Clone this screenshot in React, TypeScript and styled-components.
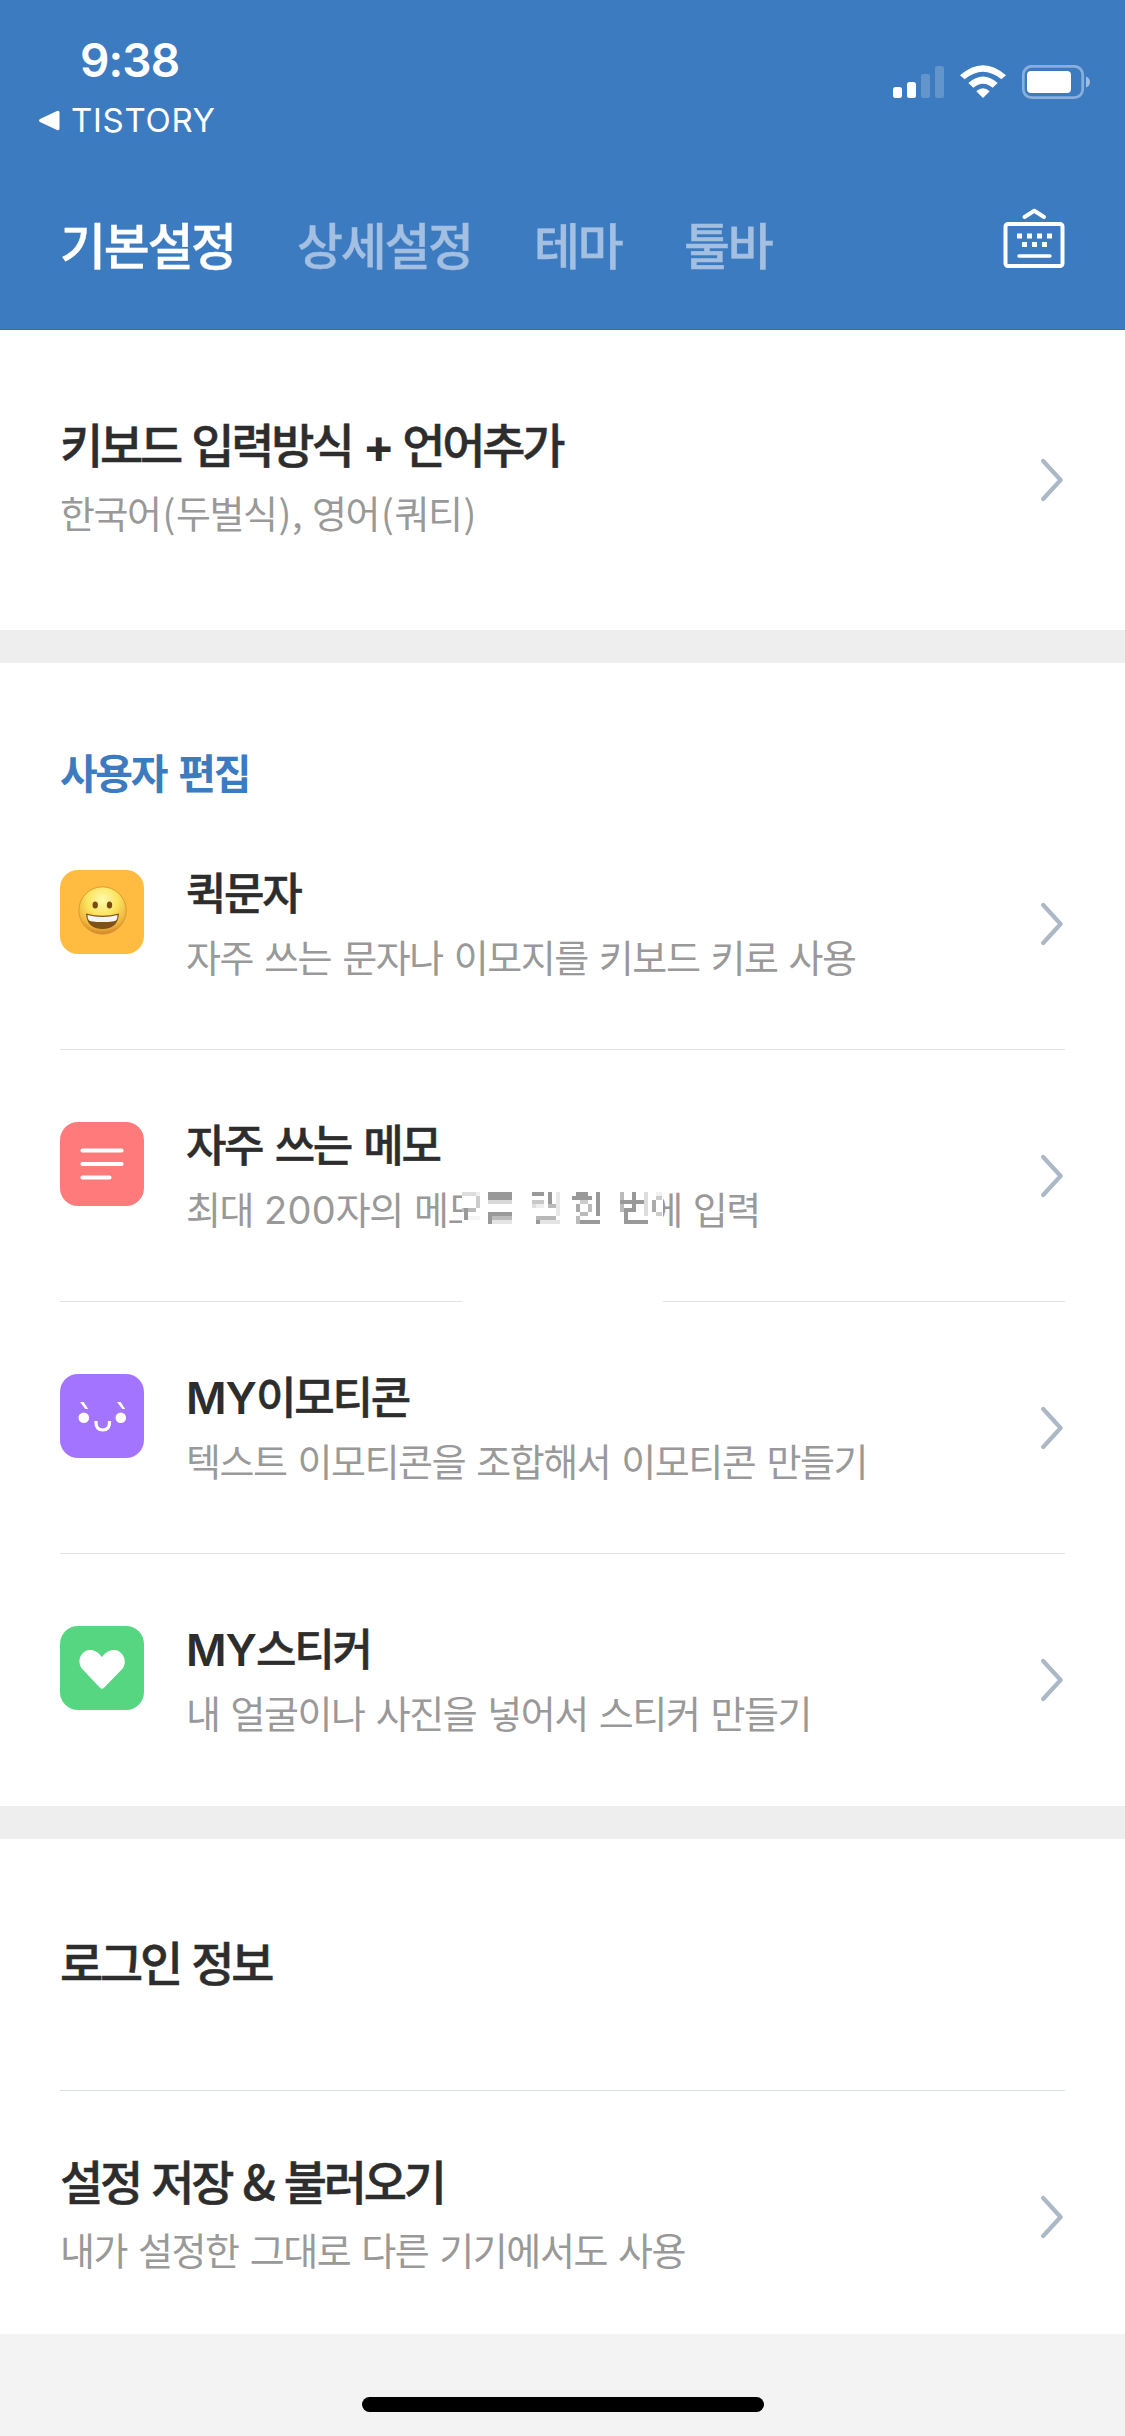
import React from "react";
import styled, { createGlobalStyle } from "styled-components";

const KR = `"Noto Sans CJK KR", "Noto Sans", sans-serif`;

const Global = createGlobalStyle`
  * { box-sizing: border-box; }
  body { margin: 0; background: #fff; font-family: ${KR}; }
`;

const Screen = styled.div`
  width: 1125px;
  height: 2436px;
  display: flex;
  flex-direction: column;
  overflow: hidden;
  background: #fff;
`;

const Header = styled.header`
  height: 330px;
  flex: none;
  background: #3d7bc1;
  border-bottom: 1px solid #3873b7;
  color: #fff;
`;

const StatusBar = styled.div`
  display: flex;
  justify-content: space-between;
  height: 150px;
  padding: 30px 33px 0 37px;
`;

const StatusLeft = styled.div`
  font-family: Inter, sans-serif;
`;

const Time = styled.div`
  padding-left: 43px;
  font-size: 46px;
  font-weight: 600;
  line-height: 60px;
  letter-spacing: -0.9px;
`;

const BackLink = styled.div`
  display: flex;
  align-items: center;
  gap: 11px;
  height: 60px;
  font-size: 33px;
  font-weight: 400;
  letter-spacing: 0.7px;
`;

const StatusIcons = styled.div`
  display: flex;
  align-items: flex-start;
  padding-top: 35px;
`;

const Nav = styled.nav`
  display: flex;
  align-items: center;
  height: 180px;
  padding: 6px 60.5px 0 60px;
`;

const Tab = styled.div<{ $active?: boolean; $width: number }>`
  width: ${(p) => p.$width}px;
  flex: none;
  font-size: 50px;
  font-weight: 500;
  line-height: 60px;
  letter-spacing: -2.3px;
  white-space: nowrap;
  -webkit-text-stroke: 0.4px currentColor;
  color: ${(p) => (p.$active ? "#fff" : "#a3bfe1")};
`;

const KeyboardButton = styled.div`
  display: flex;
  margin-left: auto;
  padding-bottom: 8px;
`;

const Section = styled.section<{ $height: number }>`
  height: ${(p) => p.$height}px;
  flex: none;
  overflow: hidden;
`;

const Gap = styled.div`
  height: 33px;
  flex: none;
  background: #eeeeee;
`;

const SectionHeading = styled.h2`
  margin: 0;
  height: 135px;
  padding: 81px 60px 0;
  font-size: 41px;
  font-weight: 700;
  line-height: 54px;
  letter-spacing: -2.4px;
  word-spacing: 5.5px;
  color: #3d7bc1;
`;

const Row = styled.div<{ $height?: number; $line?: string }>`
  position: relative;
  display: flex;
  align-items: center;
  height: ${(p) => p.$height ?? 252}px;
  margin: 0 60px;
  border-bottom: 1px solid ${(p) => p.$line ?? "transparent"};
`;

const Tile = styled.div<{ $color: string }>`
  width: 84px;
  height: 84px;
  flex: none;
  align-self: flex-start;
  margin: 72px 42px 0 0;
  border-radius: 18px;
  background: ${(p) => p.$color};
`;

const Labels = styled.div<{ $lift?: number }>`
  flex: 1;
  white-space: nowrap;
  padding-bottom: ${(p) => p.$lift ?? 0}px;
`;

const Title = styled.div<{ $large?: boolean; $spacing?: number }>`
  font-size: ${(p) => (p.$large ? 47 : 44)}px;
  font-weight: 500;
  line-height: 64px;
  letter-spacing: ${(p) => p.$spacing ?? (p.$large ? -3.2 : -2.4)}px;
  word-spacing: ${(p) => (p.$large ? 3.8 : 5)}px;
  -webkit-text-stroke: 0.5px currentColor;
  color: #2d2d2d;
`;

const Description = styled.div<{ $large?: boolean }>`
  font-size: 38px;
  font-weight: 400;
  line-height: ${(p) => (p.$large ? 74 : 66)}px;
  letter-spacing: -1.45px;
  word-spacing: 4px;
  color: #999;
`;

const Latin = styled.span<{ $weight?: number; $spacing?: number }>`
  font-family: Inter, sans-serif;
  font-weight: ${(p) => p.$weight ?? 400};
  letter-spacing: ${(p) => p.$spacing ?? 0}px;
  line-height: 1;
  -webkit-text-stroke: 0;
`;

const Paren = styled.span`
  padding: 0 2px;
`;

const Redaction = styled.svg`
  position: absolute;
  left: 402px;
  top: 136px;
`;

const ChevronIcon = styled.svg`
  flex: none;
`;

const Footer = styled.footer`
  flex: 1;
  display: flex;
  justify-content: center;
  padding-top: 63px;
  background: #f3f3f3;
`;

const HomeBar = styled.div`
  width: 402px;
  height: 15px;
  border-radius: 8px;
  background: #000;
`;

const Chevron = () => (
  <ChevronIcon width="24" height="46" viewBox="0 0 24 46" fill="none">
    <path d="M2.200 4L19.600 23L2.200 42" stroke="#adb8c6" strokeWidth="4.200" strokeLinecap="round" strokeLinejoin="round" />
  </ChevronIcon>
);

const SystemIcons = () => (
  <svg width="200" height="36" viewBox="0 0 200 36">
    <rect x="1" y="22" width="9" height="11" rx="2.500" fill="#fff" />
    <rect x="15" y="17" width="9" height="16" rx="2.500" fill="#fff" />
    <rect x="29" y="9" width="9" height="24" rx="2.500" fill="#fff" opacity=".2" />
    <rect x="43" y="1" width="9" height="32" rx="2.500" fill="#fff" opacity=".2" />
    <path d="M68 10.300Q91 -10 114 10.300L109.400 14.300Q91 -0.800 72.600 14.300Z" fill="#fff" />
    <path d="M76.300 18Q91 5 105.700 18L100.600 22.700Q91 14.800 81.400 22.700Z" fill="#fff" />
    <path d="M84.300 26.300Q91 20 97.700 26.300L91 33Z" fill="#fff" />
    <rect x="131.300" y="1.300" width="59.400" height="31.400" rx="8.500" fill="none" stroke="#fff" strokeWidth="2.700" opacity=".4" />
    <rect x="135" y="6" width="44" height="22" rx="4" fill="#fff" />
    <path d="M194 11.500Q198 13 198 17Q198 21 194 22.500Z" fill="#fff" opacity=".5" />
  </svg>
);

const KeyboardIcon = () => (
  <svg width="64" height="62" viewBox="0 0 64 62" fill="none" stroke="#fff" strokeLinecap="round" strokeLinejoin="round">
    <path d="M23.500 9L33.300 2.700L43 9" strokeWidth="4" />
    <rect x="4.500" y="16" width="57" height="42" rx="2.500" strokeWidth="4" />
    <path d="M18 48H49" strokeWidth="3.500" />
    <g fill="#fff" stroke="none">
      {[16, 26, 36, 46].map((x) => <rect key={x} x={x} y="25.500" width="5" height="5" />)}
      {[21, 31, 41].map((x) => <rect key={x} x={x} y="34" width="5" height="5" />)}
    </g>
  </svg>
);

const SmileIcon = () => (
  <svg width="84" height="84" viewBox="0 0 84 84">
    <defs>
      <radialGradient id="face" cx=".5" cy=".28" r=".74">
        <stop offset="0" stopColor="#fffbb0" />
        <stop offset=".45" stopColor="#fbe35c" />
        <stop offset=".8" stopColor="#efb33c" />
        <stop offset="1" stopColor="#c97a20" />
      </radialGradient>
    </defs>
    <circle cx="42.500" cy="40.500" r="23.700" fill="url(#face)" stroke="#dd9a32" strokeWidth="1" />
    <ellipse cx="35.200" cy="35" rx="2.700" ry="3.600" fill="#7b4a12" />
    <ellipse cx="49.500" cy="35" rx="2.700" ry="3.600" fill="#7b4a12" />
    <path d="M26 43.500Q42.500 48 59 43.500Q58 59 42.500 59Q27 59 26 43.500Z" fill="#7f5112" />
    <path d="M27.500 45Q42.500 49 57.500 45Q57.500 51 54 51.200Q42.500 53 31 51.200Q27.500 51 27.500 45Z" fill="#f4f4f2" />
  </svg>
);

const MemoIcon = () => (
  <svg width="84" height="84" viewBox="0 0 84 84" stroke="#fff" strokeWidth="4.200" strokeLinecap="round">
    <path d="M22.500 28.500H61.500M22.500 42H61.500M22.500 55.500H49.500" />
  </svg>
);

const FaceIcon = () => (
  <svg width="84" height="84" viewBox="0 0 84 84" fill="#fff">
    <circle cx="23.800" cy="43.800" r="5.300" />
    <circle cx="60.800" cy="43.800" r="5.300" />
    <path d="M20 28H23.600L28.200 35H25.400ZM57 28H60.600L65.200 35H62.400Z" />
    <path d="M36 47V48.500Q36 56 42.700 56Q49.500 56 49.500 48.500V47" fill="none" stroke="#fff" strokeWidth="3.200" />
  </svg>
);

const HeartIcon = () => (
  <svg width="84" height="84" viewBox="0 0 84 84">
    <path d="M42 31.300C36 22 26 22.500 21.800 28.300C18 33.500 19 40 23 43.800L40 61.800Q42 63.700 44 61.800L61.500 43.800C65.500 40 66 33.500 62.200 28.300C58 22.500 48 22 42 31.300Z" fill="#fff" />
  </svg>
);

/* Blocks on a 4px grid: x, y, width, height, shade. */
const BLOCKS: [number, number, number, number, string][] = [
  [0, 2, 14, 4, "#ddd"], [14, 2, 4, 4, "#eee"], [14, 6, 4, 12, "#ccc"], [0, 18, 6, 4, "#bbb"],
  [2, 18, 4, 12, "#999"], [6, 18, 8, 4, "#bbb"], [6, 26, 12, 4, "#f5f5f5"],
  [26, 2, 24, 8, "#999"], [26, 10, 24, 4, "#d8d8d8"], [26, 22, 24, 4, "#999"], [26, 26, 4, 8, "#999"],
  [30, 26, 20, 4, "#bbb"], [30, 30, 20, 4, "#e4e4e4"],
  [70, 2, 12, 4, "#999"], [86, 2, 4, 16, "#999"], [94, 2, 4, 24, "#e8e8e8"], [70, 10, 12, 4, "#c8c8c8"],
  [70, 14, 4, 4, "#ddd"], [74, 14, 8, 4, "#eee"], [86, 14, 8, 4, "#bbb"], [74, 26, 20, 4, "#b8b8b8"],
  [74, 30, 4, 4, "#999"], [78, 30, 20, 4, "#e4e4e4"],
  [114, 2, 12, 4, "#999"], [110, 6, 20, 4, "#999"], [114, 14, 4, 8, "#aaa"], [118, 10, 8, 4, "#ccc"],
  [126, 14, 4, 8, "#bbb"], [118, 22, 8, 4, "#bbb"], [134, 2, 4, 24, "#999"], [114, 26, 4, 8, "#bbb"],
  [118, 30, 20, 4, "#999"],
  [158, 2, 4, 20, "#bbb"], [170, 2, 4, 20, "#999"], [158, 10, 24, 4, "#999"], [162, 18, 8, 4, "#999"],
  [182, 2, 4, 24, "#ddd"], [162, 22, 4, 12, "#999"], [166, 30, 20, 4, "#999"],
  [190, 10, 4, 12, "#aaa"], [194, 2, 6, 4, "#f0f0f0"], [194, 6, 6, 4, "#ccc"], [194, 22, 6, 4, "#ccc"],
];

const Mosaic = () => (
  <Redaction width="201" height="116" viewBox="0 -4 201 116" shapeRendering="crispEdges">
    <rect y="-4" width="201" height="116" fill="#fff" />
    {BLOCKS.map(([x, y, w, h, fill], i) => <rect key={i} x={x} y={y} width={w} height={h} fill={fill} />)}
  </Redaction>
);

export default function App() {
  return (
    <Screen>
      <Global />
      <Header>
        <StatusBar>
          <StatusLeft>
            <Time>9:38</Time>
            <BackLink>
              <svg width="23" height="21" viewBox="0 0 23 21"><path d="M3 9L20 1Q22.500 0.300 22.500 2.500V18.500Q22.500 20.700 20 20L3 12Q1 10.500 3 9Z" fill="#fff" /></svg>
              TISTORY
            </BackLink>
          </StatusLeft>
          <StatusIcons><SystemIcons /></StatusIcons>
        </StatusBar>
        <Nav>
          <Tab $active $width={237}>기본설정</Tab>
          <Tab $width={237}>상세설정</Tab>
          <Tab $width={150}>테마</Tab>
          <Tab $width={150}>툴바</Tab>
          <KeyboardButton><KeyboardIcon /></KeyboardButton>
        </Nav>
      </Header>

      <Section $height={300}>
        <Row $height={300}>
          <Labels>
            <Title $large>키보드 입력방식 <Latin $weight={700} $spacing={-3.5}>+</Latin> 언어추가</Title>
            <Description $large>
              한국어<Paren>(</Paren>두벌식<Paren>)</Paren>, 영어<Paren>(</Paren>쿼티<Paren>)</Paren>
            </Description>
          </Labels>
          <Chevron />
        </Row>
      </Section>
      <Gap />

      <Section $height={1143}>
        <SectionHeading>사용자 편집</SectionHeading>
        <Row $line="#e1e1e6">
          <Tile $color="#ffbc40"><SmileIcon /></Tile>
          <Labels>
            <Title>퀵문자</Title>
            <Description>자주 쓰는 문자나 이모지를 키보드 키로 사용</Description>
          </Labels>
          <Chevron />
        </Row>
        <Row $line="#e1e1e6">
          <Tile $color="#ff7b7b"><MemoIcon /></Tile>
          <Labels>
            <Title>자주 쓰는 메모</Title>
            <Description>최대 <Latin $spacing={0.2}>200</Latin>자의 메모를 탭 한 번에 입력</Description>
          </Labels>
          <Chevron />
          <Mosaic />
        </Row>
        <Row $line="#e1e1e6">
          <Tile $color="#a374ff"><FaceIcon /></Tile>
          <Labels>
            <Title $spacing={-2.2}><Latin $weight={600} $spacing={-1}>MY</Latin>이모티콘</Title>
            <Description>텍스트 이모티콘을 조합해서 이모티콘 만들기</Description>
          </Labels>
          <Chevron />
        </Row>
        <Row>
          <Tile $color="#57d681"><HeartIcon /></Tile>
          <Labels>
            <Title $spacing={-2.2}><Latin $weight={600} $spacing={-1}>MY</Latin>스티커</Title>
            <Description>내 얼굴이나 사진을 넣어서 스티커 만들기</Description>
          </Labels>
          <Chevron />
        </Row>
      </Section>
      <Gap />

      <Section $height={495}>
        <Row $line="#d9dfe6">
          <Labels $lift={8}><Title $large>로그인 정보</Title></Labels>
        </Row>
        <Row>
          <Labels>
            <Title $large>설정 저장 &amp; 불러오기</Title>
            <Description $large>내가 설정한 그대로 다른 기기에서도 사용</Description>
          </Labels>
          <Chevron />
        </Row>
      </Section>

      <Footer><HomeBar /></Footer>
    </Screen>
  );
}
